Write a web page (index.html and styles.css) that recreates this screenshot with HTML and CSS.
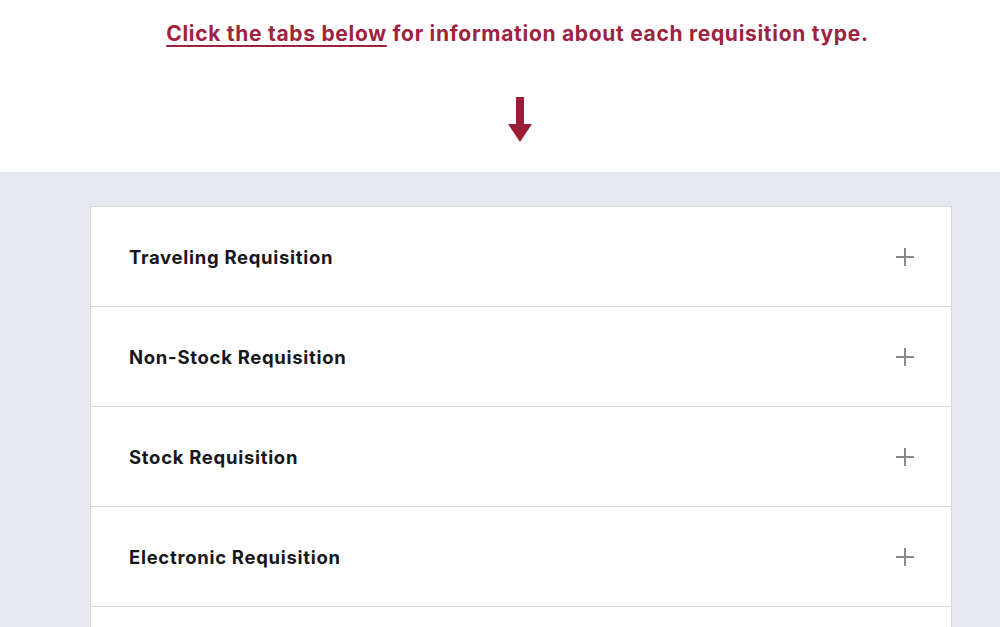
FILE: index.html
```html
<!DOCTYPE html>
<html lang="en">
<head>
<meta charset="utf-8">
<title>Requisition types</title>
<link rel="stylesheet" href="styles.css">
</head>
<body>
<section class="intro">
  <p class="lead"><a href="#" class="lead-link">Click the tabs below</a> for information about each requisition type.</p>
  <div class="arrow" aria-hidden="true">
    <svg width="26" height="46" viewBox="0 0 26 46"><rect x="9" y="0" width="8" height="30" fill="#9b1c36"/><polygon points="1,27 25,27 13,45" fill="#9b1c36"/></svg>
  </div>
</section>
<section class="panel">
  <div class="accordion">
    <div class="item"><span class="title">Traveling Requisition</span><span class="plus"></span></div>
    <div class="item"><span class="title">Non-Stock Requisition</span><span class="plus"></span></div>
    <div class="item"><span class="title">Stock Requisition</span><span class="plus"></span></div>
    <div class="item"><span class="title">Electronic Requisition</span><span class="plus"></span></div>
    <div class="item item-partial"></div>
  </div>
</section>
</body>
</html>
```
FILE: styles.css
```css
html, body { margin: 0; padding: 0; }
body { font-family: Inter, "Noto Sans", sans-serif; background: #e6e9f1; overflow: hidden; height: 627px; }
.intro { background: #fff; height: 172px; display: flex; flex-direction: column; align-items: center; padding-left: 35px; }
.lead { margin: 21px 0 0; font-size: 21px; font-weight: 700; color: #9e2340; letter-spacing: 0.7px; }
.lead-link { color: #9e2340; text-decoration: underline; text-underline-offset: 4px; text-decoration-thickness: 2px; }
.arrow { margin-top: 51px; margin-left: 4px; line-height: 0; }
.panel { padding: 34px 0 0 90px; }
.accordion { width: 860px; background: #fff; border: 1px solid #d4d6da; border-bottom: none; }
.item { height: 99px; border-bottom: 1px solid #d4d6da; display: flex; align-items: center; justify-content: space-between; padding: 0 37px 0 38px; }
.title { font-size: 18.5px; font-weight: 700; color: #17171c; letter-spacing: 0.7px; }
.plus { position: relative; width: 18px; height: 18px; }
.plus::before, .plus::after { content: ""; position: absolute; background: #8a8a8a; }
.plus::before { left: 0; top: 8px; width: 18px; height: 2px; }
.plus::after { left: 8px; top: 0; width: 2px; height: 18px; }
```
